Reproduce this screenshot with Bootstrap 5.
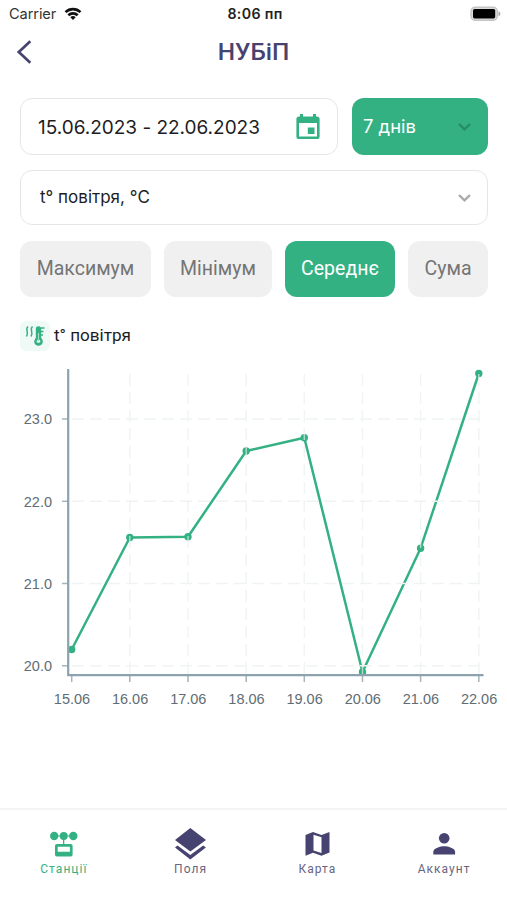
<!DOCTYPE html>
<html lang="uk">
<head>
<meta charset="utf-8">
<meta name="viewport" content="width=device-width, initial-scale=1">
<title>НУБіП</title>
<link href="https://cdn.jsdelivr.net/npm/bootstrap@5.3.0/dist/css/bootstrap.min.css" rel="stylesheet">
<style>
:root{--green:#34b183;--navy:#474370}
body{font-family:Roboto,"Liberation Sans",sans-serif;color:#1d1d1f;background:#fff}
.inter{font-family:Inter,"Liberation Sans",sans-serif}
.screen{height:900px;overflow:hidden}
svg{display:block;flex:none}
.status{height:27px;padding:1px 6px 0 9px;font-size:14.6px;line-height:26px}
.status-side{flex:1 1 0}
.carrier{color:#333;letter-spacing:-.1px}
.clock{font-size:14.2px;font-weight:600;color:#222;letter-spacing:.35px}
.head{height:50px;display:grid;grid-template-columns:1fr auto 1fr;padding:0 16px}
.title{font-size:24.4px;font-weight:500;color:var(--navy);line-height:50px}
.content{padding:21px 19px 0 20px}
.field{border:1.5px solid #e6e6e7;border-radius:12px}
.date-field{width:318px;height:57px;padding:3px 17px 0 17px;font-size:19px;letter-spacing:-.02px}
.date-field svg{margin-top:-3px}
.days{width:136px;height:57px;border-radius:12px;background:var(--green);color:#fff;font-size:18.4px;padding:0 17px 0 11px}
.select-field{height:55px;margin-top:15px;padding:1px 16px 0 19px;font-size:17px}
.chips{gap:13px;margin-top:16px}
.chip{height:56px;border:0;border-radius:12px;background:#f0f0f0;color:#757575;font-size:19.5px;padding:0}
.chip.active{background:var(--green)!important;color:#fff}
.legend-row{height:30px;margin-top:24px;font-size:17.1px}
.legend-icon{width:30px;height:30px;border-radius:6px;background:#eff9f6}
.chart{margin-top:4px}
.tabs{height:92px;border-top:2px solid #f4f4f4}
.tab{color:var(--navy);font-size:12px;letter-spacing:1.05px;padding-top:18px;text-decoration:none}
.tab svg{height:34px;width:40px}
.tab span{line-height:15px;color:#69657f;padding-left:1px}
.tab.active,.tab.active span{color:var(--green)}
</style>
</head>
<body>
<div class="screen d-flex flex-column">
  <div class="status inter d-flex align-items-center">
    <div class="status-side d-flex align-items-center gap-1"><span class="carrier">Carrier</span>
      <svg class="ms-1" width="18" height="14" viewBox="0 0 20 15" fill="none" stroke="#111" stroke-width="2.900"><path d="M1.700 5.400a12 12 0 0 1 16.600 0M4.800 8.900a7.500 7.500 0 0 1 10.400 0"/><path d="M10 14.200 7 11.200a4.300 4.300 0 0 1 6 0z" fill="#111" stroke="none"/></svg>
    </div>
    <span class="clock">8:06 пп</span>
    <div class="status-side d-flex justify-content-end">
      <svg width="31" height="16" viewBox="0 0 31 16"><rect x="1" y="1.200" width="26.300" height="13" rx="4" fill="#ddd" stroke="#c4c4c4" stroke-width="1.400"/><rect x="3" y="3" width="22.200" height="9.400" rx="1.600" fill="#000"/><path d="M28.500 5.300c2.600 1 2.600 4 0 5z" fill="#aaa"/></svg>
    </div>
  </div>
  <header class="head align-items-center">
    <svg width="16" height="26" viewBox="0 0 16 26" fill="none" stroke="#474370" stroke-width="2.700"><path d="M14.300 2.200 2.800 13l11.500 10.800"/></svg>
    <div class="title">НУБіП</div>
  </header>
  <main class="content flex-grow-1">
    <div class="d-flex justify-content-between">
      <div class="field date-field inter d-flex align-items-center justify-content-between"><span>15.06.2023 - 22.06.2023</span>
        <svg width="24" height="26" viewBox="0 0 24 26"><path fill="#34b183" fill-rule="evenodd" d="M4 0h3v2.600h10V0h3v2.600h1a2.600 2.600 0 0 1 2.600 2.600v17.200A2.600 2.600 0 0 1 21 25H3A2.600 2.600 0 0 1 .4 22.400V5.200A2.600 2.600 0 0 1 3 2.600h1zM3 9v13.400h18V9zM11.800 13.500h6.700v6.500h-6.700z"/></svg>
      </div>
      <div class="days inter d-flex align-items-center justify-content-between"><span>7 днів</span>
        <svg width="13" height="8" viewBox="0 0 13 8" fill="none" stroke="#268b66" stroke-width="2.400"><path d="m1 1 5.500 5.300L12 1"/></svg>
      </div>
    </div>
    <div class="field select-field inter d-flex align-items-center justify-content-between"><span>t° повітря, °C</span>
      <svg width="13" height="8" viewBox="0 0 13 8" fill="none" stroke="#aaa" stroke-width="2.400"><path d="m1 1 5.500 5.300L12 1"/></svg>
    </div>
    <div class="chips d-flex">
      <button class="btn chip" style="width:131px">Максимум</button>
      <button class="btn chip" style="width:108px">Мінімум</button>
      <button class="btn chip active" style="width:110px">Середнє</button>
      <button class="btn chip" style="width:80px">Сума</button>
    </div>
    <div class="legend-row d-flex align-items-center">
      <div class="legend-icon d-flex align-items-center justify-content-center me-1">
        <svg width="22" height="22" viewBox="0 0 22 22" fill="none" stroke="#34b183" stroke-width="1.500"><path d="M4 1.500C.5 4.500 5.500 7 2.500 11.500M8.500 1.500c-3.500 3 1.500 5.500-1.500 10"/><path d="M14.500 4v12" stroke-width="5.400" stroke-linecap="round"/><circle cx="14.500" cy="16.500" r="4.300" fill="#34b183" stroke="none"/><circle cx="14.500" cy="16.300" r="1.800" fill="#dff3ec" stroke="none"/><path d="M14.500 8v8" stroke="#a5dcc7" stroke-width="1.100"/><path d="M17 3h3.500M17 6.500h2.500M17 10h2"/></svg>
      </div><span>t° повітря</span>
    </div>
    <svg id="chart" class="chart" width="487" height="360" viewBox="20 355 487 360"></svg>
  </main>
  <nav class="tabs row g-0 flex-shrink-0">
    <a class="tab active col d-flex flex-column align-items-center">
      <svg viewBox="0 0 40 34" fill="#34b183"><circle cx="11.200" cy="8" r="4.200"/><circle cx="20.700" cy="8" r="4"/><circle cx="30.300" cy="8" r="4.200"/><path d="M10 7.400h20v1.200H10zM20 8h1.300v9H20z"/><path fill-rule="evenodd" d="M13.800 16h14a1.800 1.800 0 0 1 1.800 1.800v8.900a1.800 1.800 0 0 1-1.800 1.800h-14a1.800 1.800 0 0 1-1.800-1.800v-8.900a1.800 1.800 0 0 1 1.800-1.800zm.9 2.700v5h12.200v-5z"/></svg><span>Станції</span></a>
    <a class="tab col d-flex flex-column align-items-center">
      <svg viewBox="0 0 40 34" fill="#474370"><path d="M20.300 0 36 12 20.300 23.500 5 12zM5 19.500l2.500-2 12.800 9.500 12.900-9.500 2.700 2L20.300 31.500z"/></svg><span>Поля</span></a>
    <a class="tab col d-flex flex-column align-items-center">
      <svg viewBox="0 0 40 34" fill="#474370"><path fill-rule="evenodd" d="m8.500 7 7.500-3 8.500 3 8-3v20.500l-8 3.200-8.500-3-7.500 3zm8 -.3v15.700l8 2.700V9.300z"/></svg><span>Карта</span></a>
    <a class="tab col d-flex flex-column align-items-center">
      <svg viewBox="0 0 40 34" fill="#474370"><circle cx="20.200" cy="10.300" r="5.300"/><path d="M9.300 26.500v-2.700c0-3.800 7.200-5.600 10.900-5.600s10.900 1.800 10.900 5.600v2.700z"/></svg><span>Аккаунт</span></a>
  </nav>
</div>
<script>
const xs=[71.700,129.800,188,246.200,304.300,362.500,420.600,478.800];
const ys=[649.500,537.500,536.700,451,437.700,672,548.200,373.500];
const ticks=[[23,419],[22,501.300],[21,583.500],[20,665.800]];
let s='<polyline fill="none" stroke="#34b183" stroke-width="2.500" stroke-linejoin="round" points="'+xs.map((x,i)=>x+','+ys[i]).join(' ')+'"/>';
xs.forEach((x,i)=>s+=`<circle cx="${x}" cy="${ys[i]}" r="3.700" fill="#34b183"/>`);
xs.forEach((x,i)=>{if(i)s+=`<path d="M${x} 674V369" stroke="#e9efed" stroke-opacity=".7" stroke-width="1.400" stroke-dasharray="12 6"/>`;
 s+=`<path d="M${x} 676v6" stroke="#a5b4bc" stroke-width="1.500"/><text x="${x+.3}" y="704" text-anchor="middle">${15+i}.06</text>`});
ticks.forEach(([v,y])=>s+=`<path d="M72 ${y}H483" stroke="#f0f3f3" stroke-width="1.400" stroke-dasharray="12 6"/><path d="M62 ${y}h6" stroke="#a5b4bc" stroke-width="1.500"/><text x="52" y="${y+5.200}" text-anchor="end">${v}.0</text>`);
s+='<path d="M68.200 369v306.200H483.500" fill="none" stroke="#8ca2ae" stroke-width="2.200"/>';
const c=document.getElementById('chart');
c.innerHTML='<g font-family="Liberation Sans, Arial, sans-serif" font-size="14.500" fill="#5f6d74">'+s+'</g>';
</script>
<script src="https://cdn.jsdelivr.net/npm/bootstrap@5.3.0/dist/js/bootstrap.bundle.min.js"></script>
</body>
</html>
